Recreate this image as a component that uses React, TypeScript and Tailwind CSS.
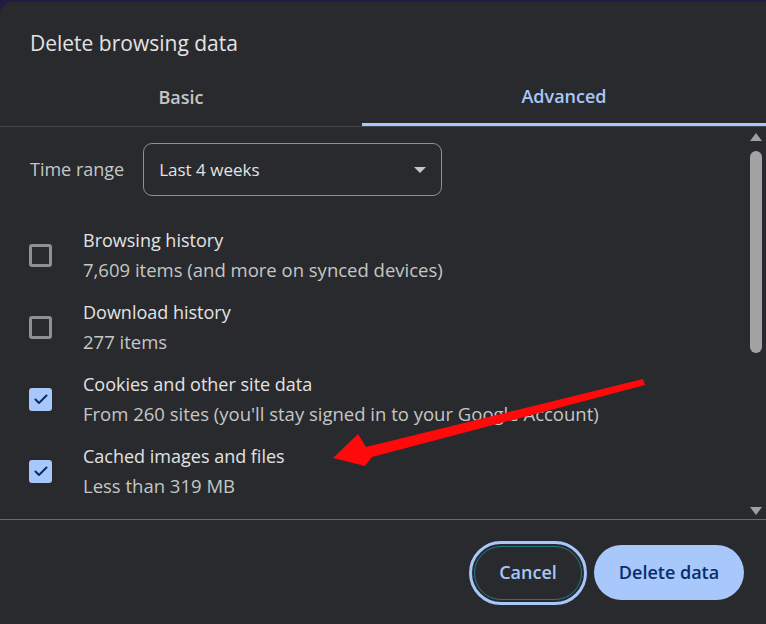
type Item = { title: string; detail: string; checked: boolean };

const items: Item[] = [
  { title: 'Browsing history', detail: '7,609 items (and more on synced devices)', checked: false },
  { title: 'Download history', detail: '277 items', checked: false },
  { title: 'Cookies and other site data', detail: "From 260 sites (you'll stay signed in to your Google Account)", checked: true },
  { title: 'Cached images and files', detail: 'Less than 319 MB', checked: true },
  { title: 'Passwords and other sign-in data', detail: 'None', checked: false },
];

const Checkbox = ({ checked }: { checked: boolean }) =>
  checked ? (
    <span className="w-[23px] h-[23px] rounded-[3px] bg-[#a8c7fa] flex items-center justify-center flex-shrink-0">
      <svg width="14" height="11" viewBox="0 0 14 11" fill="none">
        <path d="M1.5 5.5 L5 9 L12.5 1.5" stroke="#062e6f" strokeWidth="2" strokeLinecap="round" strokeLinejoin="round" />
      </svg>
    </span>
  ) : (
    <span className="w-[23px] h-[23px] rounded-[3px] border-[3px] border-[#8e918f] flex-shrink-0" />
  );

const App = () => {
  return (
    <div className="w-[766px] h-[624px] bg-[#221c40] pt-[2px] overflow-hidden" style={{ fontFamily: '"Open Sans", "Noto Sans", sans-serif' }}>
      <div className="relative h-full bg-[#292a2d] rounded-tl-[12px] flex flex-col text-[#e3e3e3]">
        {/* Header */}
        <h1 className="px-[30px] pt-[26px] text-[21px] leading-[30px] text-[#e3e3e3]">Delete browsing data</h1>

        {/* Tabs */}
        <div className="mt-[25px] flex border-b border-[#47484b]">
          <button className="w-[362px] h-[43px] text-[18px] font-semibold text-[#c4c7c5] pb-[14px]">Basic</button>
          <button className="flex-1 h-[43px] text-[18px] font-semibold text-[#a8c7fa] pb-[14px] border-b-[3px] border-[#a8c7fa] -mb-px">
            Advanced
          </button>
        </div>

        {/* Scrollable body */}
        <div className="relative h-[393px] overflow-hidden border-b border-[#6a6b6d]">
          <div className="flex items-center gap-[19px] px-[30px] pt-[16px]">
            <span className="text-[18px] text-[#c4c7c5]">Time range</span>
            <div className="w-[299px] h-[53px] rounded-[9px] border border-[#8e918f] flex items-center justify-between pl-[15px] pr-[15px]">
              <span className="text-[17px] text-[#e3e3e3]">Last 4 weeks</span>
              <svg width="12" height="6" viewBox="0 0 12 6">
                <path d="M0 0 L12 0 L6 6 Z" fill="#c4c7c5" />
              </svg>
            </div>
          </div>

          <div className="pt-[23px]">
            {items.map((item) => (
              <div key={item.title} className="h-[72px] flex items-center pl-[29px]">
                <Checkbox checked={item.checked} />
                <div className="ml-[31px] flex flex-col">
                  <span className="text-[18px] leading-[29px] text-[#e3e3e3]">{item.title}</span>
                  <span className="text-[18.5px] leading-[29px] text-[#c4c7c5]">{item.detail}</span>
                </div>
              </div>
            ))}
          </div>

          {/* Scrollbar */}
          <div className="absolute right-[4px] top-[6px] bottom-[4px] w-[13px] flex flex-col items-center">
            <svg width="12" height="8" viewBox="0 0 12 8">
              <path d="M6 0 L12 8 L0 8 Z" fill="#a0a0a0" />
            </svg>
            <div className="mt-[10px] w-[12px] h-[202px] rounded-full bg-[#a3a3a3]" />
            <div className="flex-1" />
            <svg width="12" height="8" viewBox="0 0 12 8">
              <path d="M0 0 L12 0 L6 8 Z" fill="#a0a0a0" />
            </svg>
          </div>
        </div>

        {/* Footer */}
        <div className="flex-1 flex items-center justify-end gap-[7px] pr-[22px] pt-[1px]">
          <div className="rounded-full border-[3px] border-[#a8c7fa] p-[2px]">
            <button className="w-[108px] h-[54px] rounded-full border border-[#1d7a8c] text-[18px] font-semibold text-[#a8c7fa]">
              Cancel
            </button>
          </div>
          <button className="w-[150px] h-[55px] rounded-full bg-[#a8c7fa] text-[18px] font-semibold text-[#062e6f]">
            Delete data
          </button>
        </div>

        {/* Annotation arrow */}
        <svg className="absolute left-0 top-0 pointer-events-none" width="766" height="624" viewBox="0 0 766 624">
          <path d="M333 456 L358 432 L366 445 L643 377 L645 383 L372 455 L365 464 Z" fill="#ff0a0a" />
        </svg>
      </div>
    </div>
  );
};

export default App;
